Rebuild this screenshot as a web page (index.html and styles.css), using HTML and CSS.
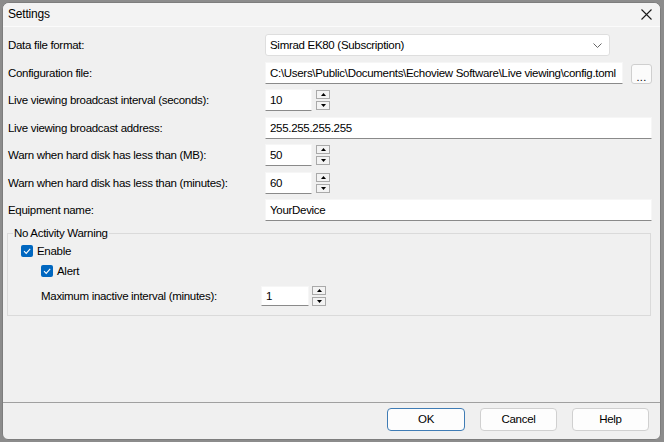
FILE: index.html
```html
<!DOCTYPE html>
<html>
	<head>
		<meta charset="UTF-8">
		<title>Settings</title>
		<link rel="stylesheet" href="styles.css">
	</head>
	<body>
		<div class="window">
			<div class="titlebar">
				<span class="title">Settings</span>
				<span class="close">
					<svg width="11" height="11" viewBox="0 0 11 11"><path d="M0.5 0.5 L10.5 10.5 M10.5 0.5 L0.5 10.5" stroke="#1a1a1a" stroke-width="1.1" fill="none"/></svg>
				</span>
			</div>
			<div class="content">
				<div class="row">
					<span class="lbl">Data file format:</span>
					<div class="combo">
						<span>Simrad EK80 (Subscription)</span>
						<svg width="9" height="5" viewBox="0 0 9 5"><path d="M0.5 0.5 L4.5 4.5 L8.5 0.5" stroke="#666" stroke-width="1" fill="none"/></svg>
					</div>
				</div>
				<div class="row">
					<span class="lbl">Configuration file:</span>
					<div class="inp path">C:\Users\Public\Documents\Echoview Software\Live viewing\config.toml</div>
					<span class="browse">...</span>
				</div>
				<div class="row">
					<span class="lbl">Live viewing broadcast interval (seconds):</span>
					<div class="inp num">10</div>
					<div class="spin">
						<span class="spin-btn"><svg width="5" height="3" viewBox="0 0 5 3"><path d="M0 3 L2.5 0 L5 3 Z" fill="#000"/></svg></span>
						<span class="spin-btn"><svg width="5" height="3" viewBox="0 0 5 3"><path d="M0 0 L2.5 3 L5 0 Z" fill="#000"/></svg></span>
					</div>
				</div>
				<div class="row">
					<span class="lbl">Live viewing broadcast address:</span>
					<div class="inp wide">255.255.255.255</div>
				</div>
				<div class="row">
					<span class="lbl">Warn when hard disk has less than (MB):</span>
					<div class="inp num">50</div>
					<div class="spin">
						<span class="spin-btn"><svg width="5" height="3" viewBox="0 0 5 3"><path d="M0 3 L2.5 0 L5 3 Z" fill="#000"/></svg></span>
						<span class="spin-btn"><svg width="5" height="3" viewBox="0 0 5 3"><path d="M0 0 L2.5 3 L5 0 Z" fill="#000"/></svg></span>
					</div>
				</div>
				<div class="row">
					<span class="lbl">Warn when hard disk has less than (minutes):</span>
					<div class="inp num">60</div>
					<div class="spin">
						<span class="spin-btn"><svg width="5" height="3" viewBox="0 0 5 3"><path d="M0 3 L2.5 0 L5 3 Z" fill="#000"/></svg></span>
						<span class="spin-btn"><svg width="5" height="3" viewBox="0 0 5 3"><path d="M0 0 L2.5 3 L5 0 Z" fill="#000"/></svg></span>
					</div>
				</div>
				<div class="row">
					<span class="lbl">Equipment name:</span>
					<div class="inp wide">YourDevice</div>
				</div>
				<fieldset class="group">
					<legend>No Activity Warning</legend>
					<div class="check-row">
						<span class="check"><svg width="12" height="12" viewBox="0 0 12 12"><path d="M3 6.2 L5.2 8.4 L9.2 3.8" stroke="#fff" stroke-width="1.1" fill="none"/></svg></span>
						<span>Enable</span>
					</div>
					<div class="check-row sub">
						<span class="check"><svg width="12" height="12" viewBox="0 0 12 12"><path d="M3 6.2 L5.2 8.4 L9.2 3.8" stroke="#fff" stroke-width="1.1" fill="none"/></svg></span>
						<span>Alert</span>
					</div>
					<div class="row sub">
						<span class="lbl short">Maximum inactive interval (minutes):</span>
						<div class="inp num small">1</div>
						<div class="spin small">
							<span class="spin-btn"><svg width="5" height="3" viewBox="0 0 5 3"><path d="M0 3 L2.5 0 L5 3 Z" fill="#000"/></svg></span>
							<span class="spin-btn"><svg width="5" height="3" viewBox="0 0 5 3"><path d="M0 0 L2.5 3 L5 0 Z" fill="#000"/></svg></span>
						</div>
					</div>
				</fieldset>
			</div>
			<div class="footer">
				<span class="btn default">OK</span>
				<span class="btn">Cancel</span>
				<span class="btn">Help</span>
			</div>
		</div>
	</body>
</html>
```

FILE: styles.css
```css
*{padding:0;margin:0;box-sizing:border-box;}
html,body{height:100%;}
body{background:#8c8c8c;font-size:11.5px;letter-spacing:-0.3px;font-family:"Liberation Sans Narrow","Arial Narrow","Liberation Sans",Arial,sans-serif;color:#000;overflow:hidden;}
.window{width:659px;height:438px;margin:2px 0 0 2px;background:#f0f0f0;border:1px solid #7d7d7d;border-radius:7px 7px 6px 6px;display:flex;flex-direction:column;overflow:hidden;}
.titlebar{height:24px;display:flex;align-items:center;justify-content:space-between;padding:0 6px 0 5px;background:#f3f3f3;border-bottom:1px solid #fbfbfb;}
.title{line-height:15px;font-size:12px;letter-spacing:-0.2px;}
.close{display:flex;width:11px;height:11px;margin-right:2px;}
.content{flex:1;padding:7px 8px 0 5px;display:flex;flex-direction:column;gap:5.5px;}
.row{height:22px;display:flex;align-items:center;}
.lbl{width:257px;flex:none;white-space:nowrap;}
.lbl.short{width:220px;}
.inp{height:22px;background:#fff;border:1px solid #f6f6f6;border-bottom-color:#8a8a8a;padding-left:4px;line-height:20px;white-space:nowrap;overflow:hidden;}
.inp.path{width:358px;}
.inp.wide{flex:1;}
.inp.num{width:47px;}
.inp.small{width:48px;height:20px;line-height:18px;}
.combo{width:345px;height:22px;background:#fff;border:1px solid #dedede;border-radius:3px;display:flex;align-items:center;justify-content:space-between;padding:0 7px 0 4px;}
.combo svg{margin-top:1px;}
.browse{width:21px;height:20px;margin:3px 0 0 8px;background:#fbfbfb;border:1px solid #cfcfcf;border-radius:3px;line-height:24px;text-align:center;font-size:11px;letter-spacing:0.3px;}
.spin{display:flex;flex-direction:column;gap:2px;margin-left:4px;}
.spin.small{margin-left:3px;}
.spin-btn{width:14px;height:9px;background:#f3f3f3;border:1px solid #a9a9a9;display:flex;align-items:center;justify-content:center;}
.group{margin:-1px 1px 0 -1px;border:1px solid #dadada;padding:2px 0 8px 13px;}
.group legend{margin-left:-8px;padding:0 1px;line-height:15px;}
.check-row{height:16px;display:flex;align-items:center;gap:4px;}
.check-row.sub{margin-top:4.5px;}
.group .row.sub{margin-top:5.5px;}
.sub{padding-left:20px;}
.check{width:12px;height:12px;background:#0067c0;border-radius:2px;display:flex;}
.footer{border-top:1px solid #a0a0a0;padding:5px 11px 8px 0;display:flex;justify-content:flex-end;gap:15px;}
.btn{width:77px;height:23px;background:#fdfdfd;border:1px solid #d0d0d0;border-radius:4px;line-height:21px;text-align:center;}
.btn.default{width:78px;border-color:#3f7cb5;}
```
